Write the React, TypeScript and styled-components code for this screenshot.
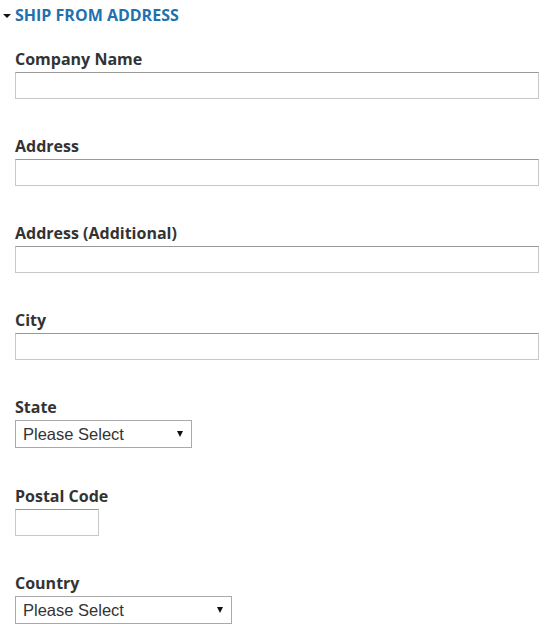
import React from "react";
import styled, { createGlobalStyle } from "styled-components";

const Global = createGlobalStyle`
  html, body { margin: 0; padding: 0; background: #fff; }
  body { font-family: "Open Sans", "Liberation Sans", sans-serif; color: #333; }
`;

const Page = styled.div`
  padding: 5px 0 0 0;
`;

const Header = styled.div`
  display: flex;
  align-items: center;
  gap: 4px;
  padding-left: 3px;
  height: 20px;
  color: #2270ae;
  font-weight: 700;
  font-size: 16px;
  letter-spacing: 0;
`;

const Caret = styled.span`
  width: 0;
  height: 0;
  border-left: 4px solid transparent;
  border-right: 4px solid transparent;
  border-top: 4px solid #111;
  margin-top: 2px;
`;

const Form = styled.div`
  display: flex;
  flex-direction: column;
  gap: 38px;
  padding: 25px 0 0 15px;
`;

const Field = styled.div<{ $extra?: number }>`
  display: flex;
  flex-direction: column;
  align-items: flex-start;
  margin-top: ${(p) => p.$extra || 0}px;
`;

const Label = styled.label`
  font-size: 16px;
  font-weight: 700;
  line-height: 18px;
  margin-bottom: 4px;
  color: #333;
`;

const TextInput = styled.div<{ $w: number }>`
  box-sizing: border-box;
  width: ${(p) => p.$w}px;
  height: 27px;
  border: 1px solid #c8c8c8;
  border-top-color: #999;
  background: #fff;
`;

const Select = styled.div<{ $w: number }>`
  box-sizing: border-box;
  width: ${(p) => p.$w}px;
  height: 28px;
  border: 1px solid #aaa;
  background: #fff;
  display: flex;
  align-items: center;
  justify-content: space-between;
  padding: 0 6px 0 7px;
  font-family: "Liberation Sans", Arial, sans-serif;
  font-size: 16.5px;
  color: #333;
`;

const SelArrow = styled.span`
  width: 0;
  height: 0;
  border-left: 3px solid transparent;
  border-right: 3px solid transparent;
  border-top: 6px solid #111;
  margin-right: 2px;
`;

type F = { label: string; kind: "text" | "select"; w: number; extra?: number };

const fields: F[] = [
  { label: "Company Name", kind: "text", w: 524 },
  { label: "Address", kind: "text", w: 524 },
  { label: "Address (Additional)", kind: "text", w: 524 },
  { label: "City", kind: "text", w: 524 },
  { label: "State", kind: "select", w: 177 },
  { label: "Postal Code", kind: "text", w: 84, extra: 1 },
  { label: "Country", kind: "select", w: 217 },
];

export default function App() {
  return (
    <Page>
      <Global />
      <Header>
        <Caret />
        <span>SHIP FROM ADDRESS</span>
      </Header>
      <Form>
        {fields.map((f) => (
          <Field key={f.label} $extra={f.extra}>
            <Label>{f.label}</Label>
            {f.kind === "text" ? (
              <TextInput $w={f.w} />
            ) : (
              <Select $w={f.w}>
                <span>Please Select</span>
                <SelArrow />
              </Select>
            )}
          </Field>
        ))}
      </Form>
    </Page>
  );
}
